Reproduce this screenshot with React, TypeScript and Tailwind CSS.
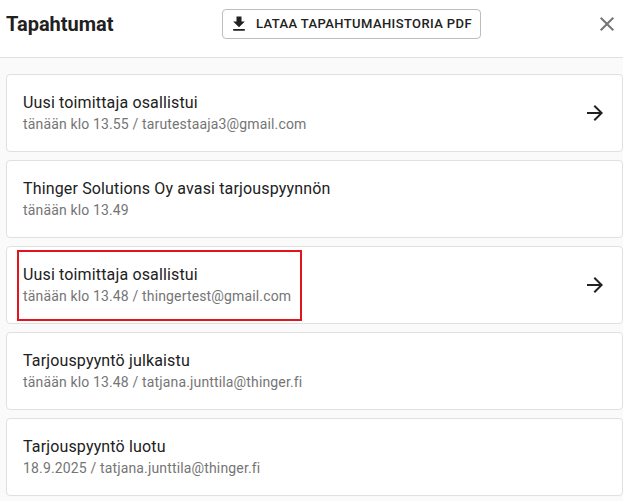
import React from "react";

const DownloadIcon: React.FC = () => (
    <svg width="20" height="20" viewBox="0 0 24 24" fill="#212121">
        <path d="M19 9h-4V3H9v6H5l7 7 7-7zM5 18v2h14v-2H5z" />
    </svg>
);

const CloseIcon: React.FC = () => (
    <svg width="24" height="24" viewBox="0 0 24 24" fill="#757575">
        <path d="M19 6.41 17.59 5 12 10.59 6.41 5 5 6.41 10.59 12 5 17.59 6.41 19 12 13.41 17.59 19 19 17.59 13.41 12z" />
    </svg>
);

const ArrowIcon: React.FC = () => (
    <svg width="24" height="24" viewBox="0 0 24 24" fill="#212121">
        <path d="M12 4l-1.41 1.41L16.17 11H4v2h12.17l-5.58 5.59L12 20l8-8z" />
    </svg>
);

type EventRow = {
    title: string;
    sub: string;
    arrow?: boolean;
    marked?: boolean;
};

const events: EventRow[] = [
    { title: "Uusi toimittaja osallistui", sub: "tänään klo 13.55 / tarutestaaja3@gmail.com", arrow: true },
    { title: "Thinger Solutions Oy avasi tarjouspyynnön", sub: "tänään klo 13.49" },
    { title: "Uusi toimittaja osallistui", sub: "tänään klo 13.48 / thingertest@gmail.com", arrow: true, marked: true },
    { title: "Tarjouspyyntö julkaistu", sub: "tänään klo 13.48 / tatjana.junttila@thinger.fi" },
    { title: "Tarjouspyyntö luotu", sub: "18.9.2025 / tatjana.junttila@thinger.fi" },
];

const App: React.FC = () => {
    return (
        <div className="h-[501px] w-[623px] overflow-hidden bg-[#fafafa] font-['Roboto',sans-serif]">
            <header className="flex h-[58px] items-center border-b border-[#e0e0e0] bg-white pb-[9px] pl-[6px]">
                <h1 className="w-[216px] text-[20px] font-bold leading-[28px] text-[#212121]">Tapahtumat</h1>
                <button
                    type="button"
                    className="flex h-[30px] w-[259px] items-center rounded border border-[#bdbdbd] bg-white pl-[6px] text-[13px] font-medium tracking-[0.4px] text-[#212121]"
                >
                    <DownloadIcon />
                    <span className="ml-[7px]">LATAA TAPAHTUMAHISTORIA PDF</span>
                </button>
                <button type="button" className="ml-auto mr-[4px] flex">
                    <CloseIcon />
                </button>
            </header>

            <main className="flex flex-col gap-2 pl-[6px] pt-4">
                {events.map((item) => (
                    <div
                        key={item.sub}
                        className="relative flex h-[78px] items-center justify-between rounded border border-[#e0e0e0] bg-white pl-4 pr-[15px]"
                    >
                        <div className="pb-px tracking-[0.15px]">
                            <div className="text-[16px] leading-[24px] text-[#212121]">{item.title}</div>
                            <div className="-mt-px text-[14px] leading-[20px] text-[#757575]">{item.sub}</div>
                        </div>
                        {item.arrow && <ArrowIcon />}
                        {item.marked && (
                            <div className="absolute left-[10px] top-[3px] h-[71px] w-[285px] border-2 border-[#e3151c]" />
                        )}
                    </div>
                ))}
            </main>
        </div>
    );
};

export default App;
